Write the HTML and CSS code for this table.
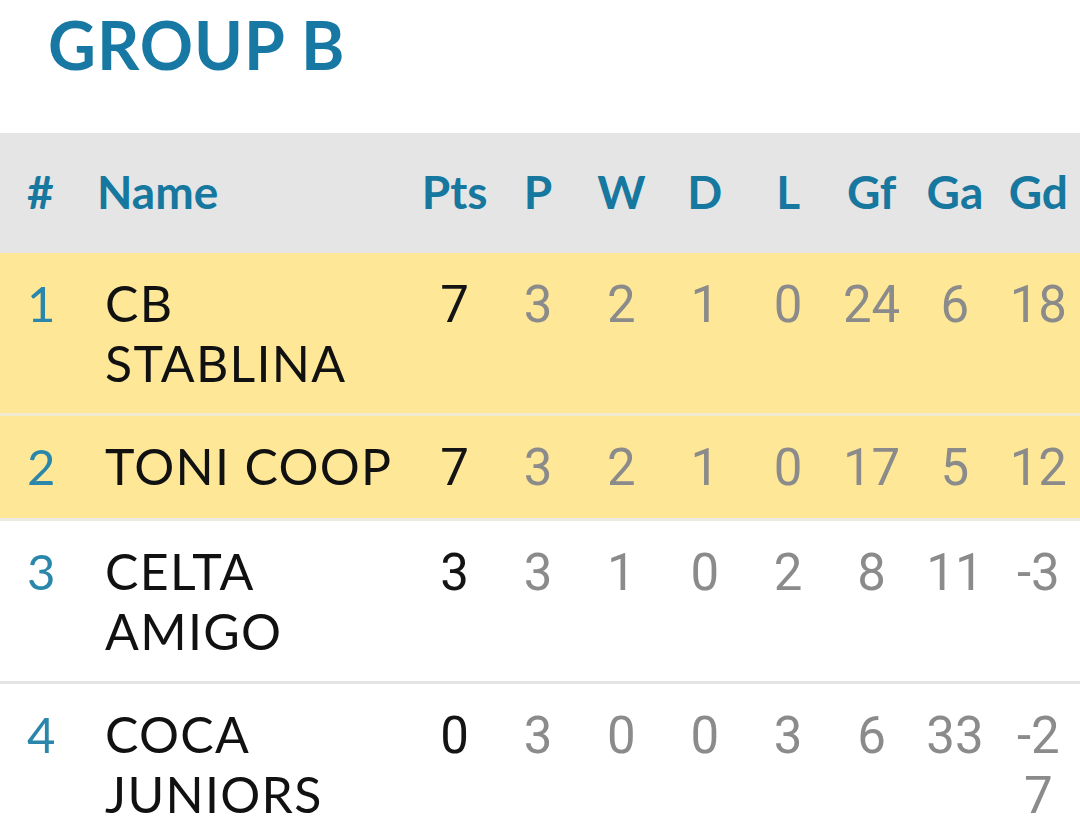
FILE: index.html
```html
<!DOCTYPE html>
<html lang="en">
<head>
<meta charset="utf-8">
<title>Group B</title>
<link rel="stylesheet" href="styles.css">
</head>
<body>
<h1 class="group-title">GROUP B</h1>
<table class="standings">
  <colgroup>
    <col class="c-rank">
    <col class="c-name">
    <col class="c-stat"><col class="c-stat"><col class="c-stat"><col class="c-stat">
    <col class="c-stat"><col class="c-stat"><col class="c-stat"><col class="c-stat">
  </colgroup>
  <thead>
    <tr>
      <th class="rank">#</th>
      <th class="name">Name</th>
      <th>Pts</th><th>P</th><th>W</th><th>D</th><th>L</th><th>Gf</th><th>Ga</th><th>Gd</th>
    </tr>
  </thead>
  <tbody>
    <tr class="qualified">
      <td class="rank">1</td><td class="name">CB STABLINA</td>
      <td class="pts">7</td><td>3</td><td>2</td><td>1</td><td>0</td><td>24</td><td>6</td><td>18</td>
    </tr>
    <tr class="qualified last-q">
      <td class="rank">2</td><td class="name">TONI COOP</td>
      <td class="pts">7</td><td>3</td><td>2</td><td>1</td><td>0</td><td>17</td><td>5</td><td>12</td>
    </tr>
    <tr>
      <td class="rank">3</td><td class="name">CELTA AMIGO</td>
      <td class="pts">3</td><td>3</td><td>1</td><td>0</td><td>2</td><td>8</td><td>11</td><td>-3</td>
    </tr>
    <tr>
      <td class="rank">4</td><td class="name">COCA JUNIORS</td>
      <td class="pts">0</td><td>3</td><td>0</td><td>0</td><td>3</td><td>6</td><td>33</td><td>-27</td>
    </tr>
  </tbody>
</table>
</body>
</html>
```

FILE: styles.css
```css
html, body {
  margin: 0;
  padding: 0;
  background: #ffffff;
}

body {
  width: 1080px;
  font-family: "Lato", "Liberation Sans", sans-serif;
}

.group-title {
  margin: 0;
  height: 128px;
  padding: 5px 0 0 48px;
  font-family: "Lato", sans-serif;
  font-weight: 700;
  font-size: 66px;
  line-height: 80px;
  color: #1779a3;
  letter-spacing: 1px;
}

.standings {
  width: 1080px;
  border-collapse: collapse;
  table-layout: fixed;
}

.c-rank { width: 104px; }
.c-name { width: 309px; }

.standings thead tr {
  background: #e5e5e5;
  height: 120px;
}

.standings th {
  font-family: "Lato", sans-serif;
  font-weight: 700;
  font-size: 46px;
  line-height: 56px;
  color: #16779f;
  text-align: center;
  vertical-align: middle;
  padding: 0 0 2px 0;
}

.standings th.rank {
  text-align: left;
  padding-left: 27px;
}

.standings th.name {
  text-align: left;
  padding-left: 0;
  text-indent: -7px;
}

.standings tbody tr {
  border-bottom: 3px solid #e4e4e4;
}

.standings tbody tr.qualified {
  background: #fee898;
  border-bottom-color: #f2ead0;
}

.standings tbody tr.last-q {
  border-bottom-color: #ecebe3;
}

.standings td {
  padding: 20px 8px 20px 8px;
  vertical-align: baseline;
  text-align: center;
  font-family: "Roboto", sans-serif;
  font-size: 51px;
  line-height: 60px;
  color: #8b8b8b;
  word-break: break-all;
}

.standings td.rank {
  text-align: left;
  padding-left: 27px;
  padding-right: 0;
  font-family: "Lato", sans-serif;
  font-size: 49px;
  color: #2b86ab;
}

.standings td.name {
  text-align: left;
  padding-left: 1px;
  padding-right: 6px;
  font-family: "Lato", sans-serif;
  font-size: 50px;
  letter-spacing: 1.3px;
  color: #111111;
  word-break: normal;
}

.standings td.pts {
  color: #141414;
}
```
